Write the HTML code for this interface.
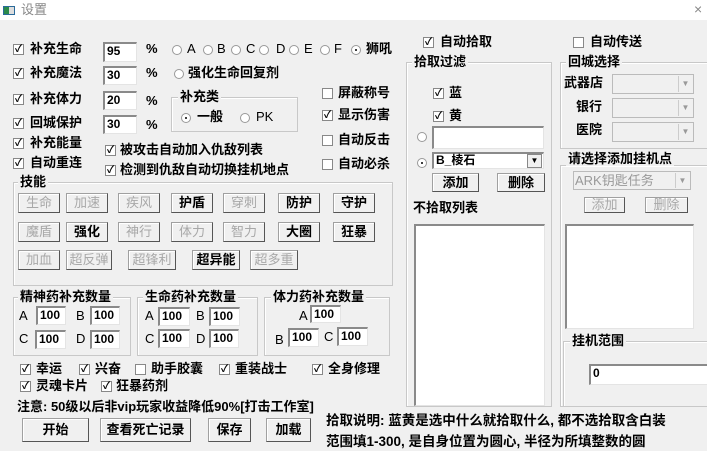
<!DOCTYPE html>
<html><head><meta charset="utf-8"><style>
*{margin:0;padding:0;box-sizing:border-box}
body{width:707px;height:451px;background:#f0f0f0;position:relative;overflow:hidden;font-family:"Liberation Sans","Noto Sans CJK SC",sans-serif;font-size:13px;font-weight:bold;color:#000}
.a{position:absolute;white-space:nowrap;line-height:14px}
.cb{position:absolute;width:11px;height:11px;border:1px solid #888;background:#fff;font-size:10px;line-height:9px;text-align:center;font-weight:bold}
.rd{position:absolute;width:10px;height:10px;border:1px solid #999;border-radius:50%;background:#fff}
.rd.on::after{content:"";position:absolute;left:3px;top:3px;width:2px;height:2px;background:#000;border-radius:50%}
.in{position:absolute;background:#fff;border-top:2px solid #8a8a8a;border-left:2px solid #8a8a8a;border-right:1px solid #e4e4e4;border-bottom:1px solid #e4e4e4;padding-left:2px;line-height:15px;font-family:"Liberation Sans",sans-serif;font-size:12px}
.gb{position:absolute;border:1px solid #c8c8c8;box-shadow:inset 1px 1px 0 #fff}
.gl{position:absolute;background:#f0f0f0;padding:0 2px;line-height:14px}
.bt{position:absolute;border:1px solid #a0a0a0;border-right-color:#555;border-bottom-color:#555;box-shadow:inset 1px 1px 0 #fff;background:#f0f0f0;text-align:center;line-height:17px}
.dis{color:#a8a8a8;font-weight:normal}
.cmb{position:absolute;background:#f0f0f0;border:1px solid #bbb}
.cmb .ar{position:absolute;right:1px;top:1px;bottom:1px;width:14px;border-left:1px solid #ccc;font-size:8px;color:#999;text-align:center;line-height:15px}
</style></head><body>
<div style="position:absolute;left:0;top:0;width:707px;height:20px;background:#fff"></div>
<div style="position:absolute;left:3px;top:6px;width:12px;height:9px;border:1px solid #2a6a9a;background:linear-gradient(90deg,#2a8a4a 50%,#ddd 50%)"></div>
<div class="a" style="left:21px;top:3px;color:#888;font-weight:normal">设置</div>
<div class="a" style="left:694px;top:2px;color:#888;font-weight:normal;font-size:14px">×</div>

<div class="cb" style="left:13px;top:44px">✓</div><div class="a" style="left:30px;top:42px">补充生命</div>
<div class="cb" style="left:13px;top:68px">✓</div><div class="a" style="left:30px;top:66px">补充魔法</div>
<div class="cb" style="left:13px;top:94px">✓</div><div class="a" style="left:30px;top:92px">补充体力</div>
<div class="cb" style="left:13px;top:118px">✓</div><div class="a" style="left:30px;top:116px">回城保护</div>
<div class="cb" style="left:13px;top:138px">✓</div><div class="a" style="left:30px;top:136px">补充能量</div>
<div class="cb" style="left:13px;top:158px">✓</div><div class="a" style="left:30px;top:156px">自动重连</div>

<div class="in" style="left:103px;top:42px;width:34px;height:20px">95</div>
<div class="in" style="left:103px;top:66px;width:34px;height:19px">30</div>
<div class="in" style="left:103px;top:91px;width:34px;height:19px">20</div>
<div class="in" style="left:103px;top:115px;width:34px;height:19px">30</div>
<div class="a" style="left:146px;top:42px">%</div>
<div class="a" style="left:146px;top:66px">%</div>
<div class="a" style="left:146px;top:94px">%</div>
<div class="a" style="left:146px;top:118px">%</div>

<div class="rd" style="left:172px;top:45px"></div><div class="a" style="left:187px;top:42px;font-weight:normal">A</div>
<div class="rd" style="left:203px;top:45px"></div><div class="a" style="left:217px;top:42px;font-weight:normal">B</div>
<div class="rd" style="left:231px;top:45px"></div><div class="a" style="left:246px;top:42px;font-weight:normal">C</div>
<div class="rd" style="left:259px;top:45px"></div><div class="a" style="left:276px;top:42px;font-weight:normal">D</div>
<div class="rd" style="left:289px;top:45px"></div><div class="a" style="left:304px;top:42px;font-weight:normal">E</div>
<div class="rd" style="left:320px;top:45px"></div><div class="a" style="left:334px;top:42px;font-weight:normal">F</div>
<div class="rd on" style="left:351px;top:45px"></div><div class="a" style="left:366px;top:42px">狮吼</div>
<div class="rd" style="left:174px;top:69px"></div><div class="a" style="left:188px;top:66px">强化生命回复剂</div>

<div class="gb" style="left:171px;top:97px;width:127px;height:35px"></div>
<div class="gl" style="left:178px;top:90px">补充类</div>
<div class="rd on" style="left:181px;top:113px"></div><div class="a" style="left:197px;top:110px">一般</div>
<div class="rd" style="left:240px;top:113px"></div><div class="a" style="left:256px;top:110px;font-weight:normal">PK</div>

<div class="cb" style="left:105px;top:145px">✓</div><div class="a" style="left:120px;top:143px">被攻击自动加入仇敌列表</div>
<div class="cb" style="left:105px;top:165px">✓</div><div class="a" style="left:120px;top:163px">检测到仇敌自动切换挂机地点</div>

<div class="cb" style="left:322px;top:88px"></div><div class="a" style="left:338px;top:86px">屏蔽称号</div>
<div class="cb" style="left:322px;top:110px">✓</div><div class="a" style="left:338px;top:108px">显示伤害</div>
<div class="cb" style="left:322px;top:135px"></div><div class="a" style="left:338px;top:133px">自动反击</div>
<div class="cb" style="left:322px;top:159px"></div><div class="a" style="left:338px;top:157px">自动必杀</div>

<div class="gb" style="left:13px;top:182px;width:380px;height:104px"></div>
<div class="gl" style="left:18px;top:175px">技能</div>
<div class="bt dis" style="left:18px;top:193px;width:42px;height:20px">生命</div>
<div class="bt dis" style="left:66px;top:193px;width:42px;height:20px">加速</div>
<div class="bt dis" style="left:118px;top:193px;width:42px;height:20px">疾风</div>
<div class="bt" style="left:171px;top:193px;width:42px;height:20px">护盾</div>
<div class="bt dis" style="left:223px;top:193px;width:42px;height:20px">穿刺</div>
<div class="bt" style="left:278px;top:193px;width:42px;height:20px">防护</div>
<div class="bt" style="left:333px;top:193px;width:42px;height:20px">守护</div>
<div class="bt dis" style="left:18px;top:222px;width:42px;height:20px">魔盾</div>
<div class="bt" style="left:66px;top:222px;width:42px;height:20px">强化</div>
<div class="bt dis" style="left:118px;top:222px;width:42px;height:20px">神行</div>
<div class="bt dis" style="left:171px;top:222px;width:42px;height:20px">体力</div>
<div class="bt dis" style="left:223px;top:222px;width:42px;height:20px">智力</div>
<div class="bt" style="left:278px;top:222px;width:42px;height:20px">大圈</div>
<div class="bt" style="left:333px;top:222px;width:42px;height:20px">狂暴</div>
<div class="bt dis" style="left:18px;top:250px;width:42px;height:20px">加血</div>
<div class="bt dis" style="left:66px;top:250px;width:46px;height:20px">超反弹</div>
<div class="bt dis" style="left:128px;top:250px;width:48px;height:20px">超锋利</div>
<div class="bt" style="left:192px;top:250px;width:48px;height:20px">超异能</div>
<div class="bt dis" style="left:250px;top:250px;width:48px;height:20px">超多重</div>

<div class="gb" style="left:13px;top:297px;width:118px;height:59px"></div><div class="gl" style="left:18px;top:290px">精神药补充数量</div>
<div class="gb" style="left:137px;top:297px;width:121px;height:59px"></div><div class="gl" style="left:143px;top:290px">生命药补充数量</div>
<div class="gb" style="left:264px;top:297px;width:126px;height:59px"></div><div class="gl" style="left:271px;top:290px">体力药补充数量</div>
<div class="a" style="left:19px;top:309px;font-weight:normal">A</div><div class="in" style="left:36px;top:306px;width:30px;height:19px">100</div>
<div class="a" style="left:76px;top:309px;font-weight:normal">B</div><div class="in" style="left:90px;top:306px;width:30px;height:19px">100</div>
<div class="a" style="left:19px;top:332px;font-weight:normal">C</div><div class="in" style="left:35px;top:330px;width:31px;height:19px">100</div>
<div class="a" style="left:76px;top:332px;font-weight:normal">D</div><div class="in" style="left:90px;top:330px;width:30px;height:19px">100</div>
<div class="a" style="left:145px;top:309px;font-weight:normal">A</div><div class="in" style="left:158px;top:307px;width:32px;height:19px">100</div>
<div class="a" style="left:196px;top:309px;font-weight:normal">B</div><div class="in" style="left:209px;top:307px;width:31px;height:19px">100</div>
<div class="a" style="left:145px;top:332px;font-weight:normal">C</div><div class="in" style="left:158px;top:329px;width:32px;height:19px">100</div>
<div class="a" style="left:196px;top:332px;font-weight:normal">D</div><div class="in" style="left:209px;top:329px;width:30px;height:19px">100</div>
<div class="a" style="left:299px;top:309px;font-weight:normal">A</div><div class="in" style="left:310px;top:305px;width:31px;height:18px">100</div>
<div class="a" style="left:275px;top:333px;font-weight:normal">B</div><div class="in" style="left:288px;top:328px;width:31px;height:19px">100</div>
<div class="a" style="left:324px;top:330px;font-weight:normal">C</div><div class="in" style="left:337px;top:327px;width:31px;height:19px">100</div>

<div class="cb" style="left:20px;top:364px">✓</div><div class="a" style="left:36px;top:362px">幸运</div>
<div class="cb" style="left:79px;top:364px">✓</div><div class="a" style="left:95px;top:362px">兴奋</div>
<div class="cb" style="left:135px;top:364px"></div><div class="a" style="left:151px;top:362px">助手胶囊</div>
<div class="cb" style="left:219px;top:364px">✓</div><div class="a" style="left:235px;top:362px">重装战士</div>
<div class="cb" style="left:312px;top:364px">✓</div><div class="a" style="left:328px;top:362px">全身修理</div>
<div class="cb" style="left:20px;top:381px">✓</div><div class="a" style="left:36px;top:379px">灵魂卡片</div>
<div class="cb" style="left:101px;top:381px">✓</div><div class="a" style="left:116px;top:379px">狂暴药剂</div>
<div class="a" style="left:17px;top:400px">注意: 50级以后非vip玩家收益降低90%[打击工作室]</div>

<div class="bt" style="left:22px;top:418px;width:67px;height:24px;line-height:21px">开始</div>
<div class="bt" style="left:100px;top:418px;width:91px;height:24px;line-height:21px">查看死亡记录</div>
<div class="bt" style="left:208px;top:418px;width:43px;height:24px;line-height:21px">保存</div>
<div class="bt" style="left:266px;top:418px;width:45px;height:24px;line-height:21px">加载</div>
<div class="a" style="left:326px;top:414px;font-size:13.5px">拾取说明: 蓝黄是选中什么就拾取什么, 都不选拾取含白装</div>
<div class="a" style="left:326px;top:435px;font-size:13.5px">范围填1-300, 是自身位置为圆心, 半径为所填整数的圆</div>

<div class="cb" style="left:423px;top:37px">✓</div><div class="a" style="left:440px;top:35px">自动拾取</div>
<div class="cb" style="left:573px;top:37px"></div><div class="a" style="left:590px;top:35px">自动传送</div>

<div class="gb" style="left:406px;top:62px;width:146px;height:345px"></div><div class="gl" style="left:412px;top:55px">拾取过滤</div>
<div class="cb" style="left:433px;top:88px">✓</div><div class="a" style="left:449px;top:86px">蓝</div>
<div class="cb" style="left:433px;top:111px">✓</div><div class="a" style="left:449px;top:109px">黄</div>
<div class="rd" style="left:417px;top:132px"></div>
<div class="in" style="left:432px;top:126px;width:112px;height:23px"></div>
<div class="rd on" style="left:417px;top:158px"></div>
<div class="in" style="left:432px;top:152px;width:112px;height:17px;line-height:13px;font-family:'Liberation Sans','Noto Sans CJK SC',sans-serif">B_棱石<span style="position:absolute;right:1px;top:0;width:15px;height:14px;background:#f0f0f0;border:1px solid #888;font-size:8px;text-align:center;line-height:12px">▼</span></div>
<div class="bt" style="left:432px;top:173px;width:47px;height:19px">添加</div>
<div class="bt" style="left:497px;top:173px;width:48px;height:19px">删除</div>
<div class="a" style="left:413px;top:201px">不拾取列表</div>
<div class="in" style="left:414px;top:224px;width:131px;height:182px"></div>

<div class="gb" style="left:560px;top:62px;width:150px;height:87px"></div><div class="gl" style="left:566px;top:55px">回城选择</div>
<div class="a" style="left:564px;top:76px">武器店</div><div class="cmb" style="left:612px;top:74px;width:82px;height:20px"><div class="ar">▼</div></div>
<div class="a" style="left:576px;top:100px">银行</div><div class="cmb" style="left:612px;top:98px;width:82px;height:20px"><div class="ar">▼</div></div>
<div class="a" style="left:576px;top:123px">医院</div><div class="cmb" style="left:612px;top:122px;width:82px;height:20px"><div class="ar">▼</div></div>

<div class="gb" style="left:560px;top:165px;width:150px;height:242px"></div><div class="gl" style="left:566px;top:152px">请选择添加挂机点</div>
<div class="cmb" style="left:573px;top:171px;width:118px;height:19px;color:#999;font-weight:normal;line-height:17px;padding-left:1px">ARK钥匙任务<div class="ar">▼</div></div>
<div class="bt dis" style="left:584px;top:197px;width:41px;height:16px;line-height:14px">添加</div>
<div class="bt dis" style="left:645px;top:197px;width:43px;height:16px;line-height:14px">删除</div>
<div class="in" style="left:565px;top:224px;width:129px;height:105px"></div>
<div class="gb" style="left:563px;top:341px;width:150px;height:66px"></div><div class="gl" style="left:570px;top:334px">挂机范围</div>
<div class="in" style="left:589px;top:364px;width:120px;height:21px">0</div>
</body></html>
